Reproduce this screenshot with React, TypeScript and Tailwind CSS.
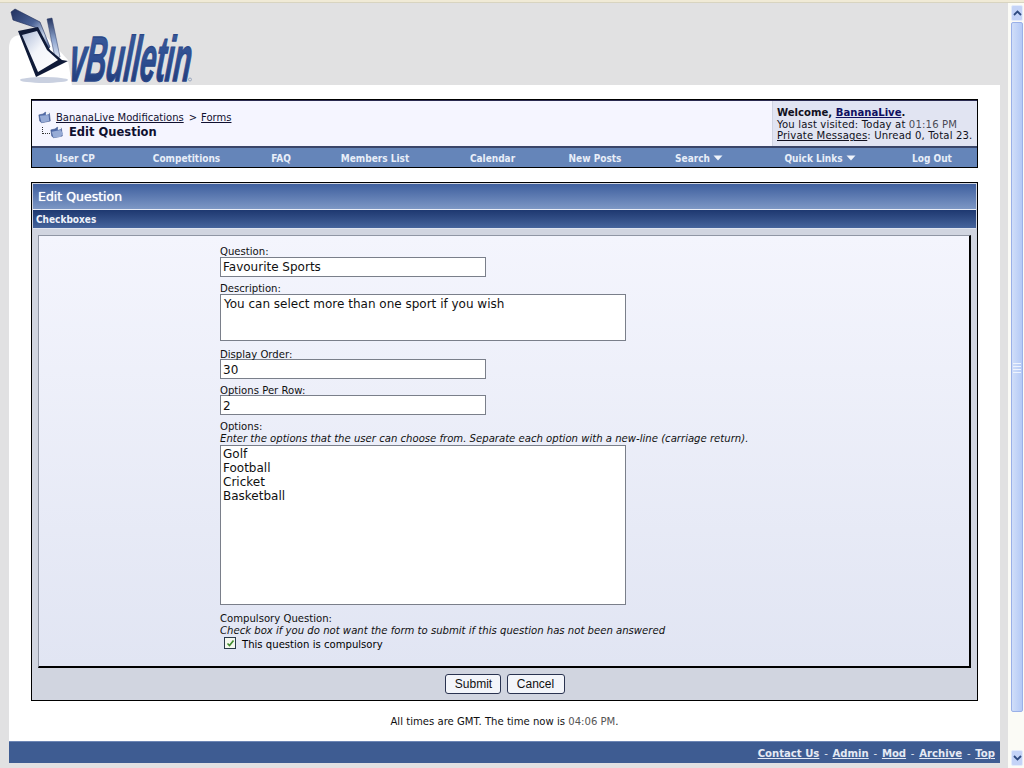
import React from "react";

const verdana = "font-['DejaVu_Sans',sans-serif]";

function Logo() {
  return (
    <svg width="200" height="86" viewBox="0 0 200 86" className="block overflow-visible">
      <defs>
        <linearGradient id="lt" x1="0" y1="0" x2="0" y2="1">
          <stop offset="0" stopColor="#3c5c9c" />
          <stop offset="0.5" stopColor="#2e4f92" />
          <stop offset="1" stopColor="#1f3570" />
        </linearGradient>
        <linearGradient id="lm" x1="0" y1="0" x2="1" y2="1">
          <stop offset="0" stopColor="#20305f" />
          <stop offset="0.45" stopColor="#4a6296" />
          <stop offset="0.75" stopColor="#c4d2e8" />
          <stop offset="1" stopColor="#3a5288" />
        </linearGradient>
        <linearGradient id="ln" x1="0" y1="0" x2="0" y2="1">
          <stop offset="0" stopColor="#24345f" />
          <stop offset="0.55" stopColor="#8fa6cf" />
          <stop offset="1" stopColor="#dde5f3" />
        </linearGradient>
        <linearGradient id="lb" x1="0" y1="0" x2="1" y2="1">
          <stop offset="0" stopColor="#aebcd8" />
          <stop offset="0.45" stopColor="#f3f5fa" />
          <stop offset="1" stopColor="#ffffff" />
        </linearGradient>
      </defs>
      <path d="M9 48 Q9 35 22 35 L45 35 L68 60 L72 86 L9 86 Z" fill="#ffffff" />
      <ellipse cx="44" cy="80" rx="24" ry="3" fill="#c9d0e0" />
      <path d="M11 12 L15 9 L40 22 L50 47 L48 49 L37 28 L13 20 Z" fill="url(#lm)" stroke="#1d2a55" strokeWidth="0.600" />
      <path d="M47 19 L52 18 L60 57 L55 58 Z" fill="url(#ln)" stroke="#2a3a68" strokeWidth="0.500" />
      <path d="M18 31 L38 27 L50 50 L62 60 L68 61 L36 77 Z" fill="#0f1a38" />
      <path d="M22 35 L37 31 L47 50 L58 60 L38 72 Z" fill="url(#lb)" />
      <text
        transform="translate(68 81) skewX(-6) scale(0.45 1)"
        fontFamily="'Liberation Sans',sans-serif"
        fontWeight="700"
        fontStyle="italic"
        fontSize="64"
        fill="url(#lt)"
        stroke="#2a4788"
        strokeWidth="1.400"
      >
        vBulletin
      </text>
      <circle cx="190" cy="79.500" r="1.500" fill="none" stroke="#8090b0" strokeWidth="0.700" />
    </svg>
  );
}

function FolderIcon({ open }: { open?: boolean }) {
  return (
    <svg width="14" height="13" viewBox="0 0 16 14" className="shrink-0">
      <path d="M1 4 L6 3 L8 1 L13 2 L14 11 L4 13 L2 11 Z" fill="#4f6aa8" stroke="#3a4f85" strokeWidth="0.700" />
      <path d={open ? "M2 6 L12 4 L15 8 L12 12 L4 13 Z" : "M2 5 L12 4 L13 11 L4 13 Z"} fill="#97abd6" />
      <path d="M9 1 L12 0 L13 3 L9 4 Z" fill="#f2f4fa" />
    </svg>
  );
}

function Down() {
  return (
    <svg width="10" height="6" viewBox="0 0 10 6" className="ml-[3px] inline-block">
      <path d="M0.500 0.500 H9.500 L5 5.500 Z" fill="#f0f4fb" />
    </svg>
  );
}

function Label({ children, className = "" }: { children: React.ReactNode; className?: string }) {
  return <div className={`h-[12px] text-[10.100px] leading-[12px] text-[#101010] ${className}`}>{children}</div>;
}

function Input({ value, className = "" }: { value: string; className?: string }) {
  return (
    <div className={`flex h-[20px] w-[266px] items-center border border-[#7a7f8a] bg-white pl-[2px] text-[12px] text-[#101010] ${className}`}>{value}</div>
  );
}

function Area({ className, children }: { className: string; children: React.ReactNode }) {
  return (
    <div className={`w-[406px] border border-[#7a7f8a] bg-white pl-[2px] text-[12px] leading-[14px] text-[#101010] ${className}`}>{children}</div>
  );
}

function ScrollBar() {
  const btn = "flex h-[16px] w-[12px] items-center justify-center rounded-[2px] border border-[#e4ebfb] bg-[#c4d3f7]";
  return (
    <div className="flex h-full w-[16px] shrink-0 flex-col bg-[#fbfbf6] pl-[3px]">
      <div className="h-[2px]" />
      <div className={btn}>
        <svg width="9" height="6" viewBox="0 0 9 6"><path d="M1 5 L4.500 1.500 L8 5" fill="none" stroke="#2f4a80" strokeWidth="1.800" /></svg>
      </div>
      <div className="mt-[1px] flex h-[690px] w-[12px] flex-col items-center justify-center gap-[2px] rounded-[2px] border border-[#9ab0e8] bg-gradient-to-r from-[#d0def9] to-[#b4c9f6] pt-[2px]">
        <div className="h-[1px] w-[8px] bg-[#eef3fd]" />
        <div className="h-[1px] w-[8px] bg-[#eef3fd]" />
        <div className="h-[1px] w-[8px] bg-[#eef3fd]" />
        <div className="h-[1px] w-[8px] bg-[#eef3fd]" />
      </div>
      <div className="grow" />
      <div className={btn}>
        <svg width="9" height="6" viewBox="0 0 9 6"><path d="M1 1 L4.500 4.500 L8 1" fill="none" stroke="#2f4a80" strokeWidth="1.800" /></svg>
      </div>
      <div className="h-[2px]" />
    </div>
  );
}

export default function App() {
  const nav: [string, boolean, string][] = [
    ["User CP", false, "w-[86px]"],
    ["Competitions", false, "w-[137px]"],
    ["FAQ", false, "w-[52px]"],
    ["Members List", false, "w-[136px]"],
    ["Calendar", false, "w-[99px]"],
    ["New Posts", false, "w-[106px]"],
    ["Search", true, "w-[102px]"],
    ["Quick Links", true, "w-[140px]"],
    ["Log Out", false, "w-[84px]"],
  ];
  return (
    <div className={`flex h-[768px] w-[1024px] flex-col overflow-hidden bg-[#e1e1e2] ${verdana}`}>
      <div className="h-[3px] shrink-0 border-b border-[#d8d4c0] bg-[#f0ead6]" />
      <div className="flex h-[765px]">
        <div className="flex h-full w-[1008px] shrink-0 flex-col">
          <div className="relative h-[82px] shrink-0">
            <div className="absolute -top-[3px] left-0"><Logo /></div>
          </div>
          <div className="ml-[9px] flex h-[656px] w-[991px] shrink-0 flex-col bg-white px-[22px] pt-[14px]">
            <div className="w-[947px] border border-black">
              <div className="flex h-[48px] border-t border-b-2 border-t-[#2a2a50] border-b-[#3a4568] bg-[#f5f5ff]">
                <div className="flex grow flex-col justify-center pt-[3px] pl-[6px] text-[10px] text-[#101030]">
                  <div className="flex h-[14px] items-center">
                    <FolderIcon />
                    <span className="ml-[4px] underline">BananaLive Modifications</span>
                    <span className="ml-[5px]">&gt;</span>
                    <span className="ml-[4px] underline">Forms</span>
                  </div>
                  <div className="mt-[1px] flex h-[15px] items-center">
                    <span className="mt-[-4px] ml-[4px] h-[7px] w-[8px] border-b border-l border-dotted border-[#333]" />
                    <FolderIcon open />
                    <span className="ml-[5px] text-[11.500px] font-bold text-[#101030]">Edit Question</span>
                  </div>
                </div>
                <div className="flex w-[205px] flex-col justify-center border-l border-[#d0d4e2] bg-[#e1e4f2] pt-[2px] pl-[4px] text-[10.100px] leading-[11.500px] whitespace-nowrap text-[#101020]">
                  <div className="font-bold">Welcome, <span className="text-[#101060] underline">BananaLive</span>.</div>
                  <div className="tracking-[0.15px]">You last visited: Today at <span className="text-[#4a4a55]">01:16 PM</span></div>
                  <div className="tracking-[0.15px]"><span className="underline">Private Messages</span>: Unread 0, Total 23.</div>
                </div>
              </div>
              <div className="flex h-[19px] items-center bg-[#6585b9] pt-[1px] font-['DejaVu_Sans_Condensed','DejaVu_Sans',sans-serif] text-[10px] font-bold text-[#e8eef8]">
                {nav.map(([t, d, w]) => (
                  <div key={t} className={`flex items-center justify-center whitespace-nowrap ${w}`}>
                    {t}
                    {d && <Down />}
                  </div>
                ))}
              </div>
            </div>

            <div className="mt-[14px] h-[519px] w-[947px] border border-black bg-[#d1d5e0] p-[1px]">
              <div className="flex h-[26px] items-center border-b border-[#e8ecf5] bg-gradient-to-b from-[#3f5f9e] to-[#7d97c4] pt-[2px] pl-[5px] text-[12.500px] text-white [text-shadow:0_0_1px_#ffffff]">
                Edit Question
              </div>
              <div className="flex h-[19px] items-center border-b border-[#dfe4ef] bg-gradient-to-b from-[#1e3870] to-[#46649c] pt-[1px] pl-[3px] font-['DejaVu_Sans_Condensed','DejaVu_Sans',sans-serif] text-[10px] font-bold text-[#eef2fa]">
                Checkboxes
              </div>
              <div className="mx-[5px] mt-[6px] h-[433px] border-t border-r-2 border-b-2 border-l border-t-[#9096a4] border-r-black border-b-black border-l-[#9096a4] bg-gradient-to-b from-[#f4f5fd] to-[#e1e5f3] pt-[10px] pl-[181px]">
                <Label>Question:</Label>
                <Input value="Favourite Sports" className="mt-[-1px] mb-[6px]" />
                <Label>Description:</Label>
                <Area className="mt-[-1px] mb-[8px] h-[47px] pt-[2px] pl-[3px]">You can select more than one sport if you wish</Area>
                <Label>Display Order:</Label>
                <Input value="30" className="mt-[-2px] mb-[6px] pt-[2px]" />
                <Label>Options Per Row:</Label>
                <Input value="2" className="mt-[-2px] mb-[6px] pt-[2px]" />
                <Label>Options:</Label>
                <Label className="italic">Enter the options that the user can choose from. Separate each option with a new-line (carriage return).</Label>
                <Area className="h-[160px] pt-[1px]">
                  <div>Golf</div>
                  <div>Football</div>
                  <div>Cricket</div>
                  <div>Basketball</div>
                </Area>
                <Label className="mt-[8px]">Compulsory Question:</Label>
                <Label className="italic">Check box if you do not want the form to submit if this question has not been answered</Label>
                <div className="ml-[4px] flex items-start gap-[6px] text-[10.100px] leading-[12px]">
                  <span className="flex h-[12px] w-[12px] items-center justify-center border border-[#2a3a4a] bg-[#f4f8ee]">
                    <svg width="9" height="9" viewBox="0 0 9 9"><path d="M1.500 4.500 L3.500 6.500 L7.500 1.500" fill="none" stroke="#3f8a2e" strokeWidth="1.600" /></svg>
                  </span>
                  <span className="mt-[2px]">This question is compulsory</span>
                </div>
              </div>
              <div className="mt-[6px] flex justify-center gap-[6px] font-['Liberation_Sans',sans-serif] text-[12px] text-[#101010]">
                <div className="flex h-[20px] w-[56px] items-center justify-center rounded-[3px] border border-[#2a3350] bg-[#f3f5fa] pl-[2px]">Submit</div>
                <div className="flex h-[20px] w-[58px] items-center justify-center rounded-[3px] border border-[#2a3350] bg-[#f3f5fa]">Cancel</div>
              </div>
            </div>

            <div className="mt-[14px] text-center text-[10.100px] leading-[14px] text-[#101010]">
              All times are GMT. The time now is <span className="text-[#555]">04:06 PM</span>.
            </div>
          </div>
          <div className="ml-[9px] flex h-[22px] w-[991px] shrink-0 items-center justify-end border-t border-[#6d86b5] bg-[#3e5c92] pt-[2px] pr-[5px] text-[10.100px] font-bold text-[#e4e9f4]">
            <span className="underline">Contact Us</span>
            <span className="mx-[4.750px] font-normal">-</span>
            <span className="underline">Admin</span>
            <span className="mx-[4.750px] font-normal">-</span>
            <span className="underline">Mod</span>
            <span className="mx-[4.750px] font-normal">-</span>
            <span className="underline">Archive</span>
            <span className="mx-[4.750px] font-normal">-</span>
            <span className="underline">Top</span>
          </div>
        </div>
        <ScrollBar />
      </div>
    </div>
  );
}
